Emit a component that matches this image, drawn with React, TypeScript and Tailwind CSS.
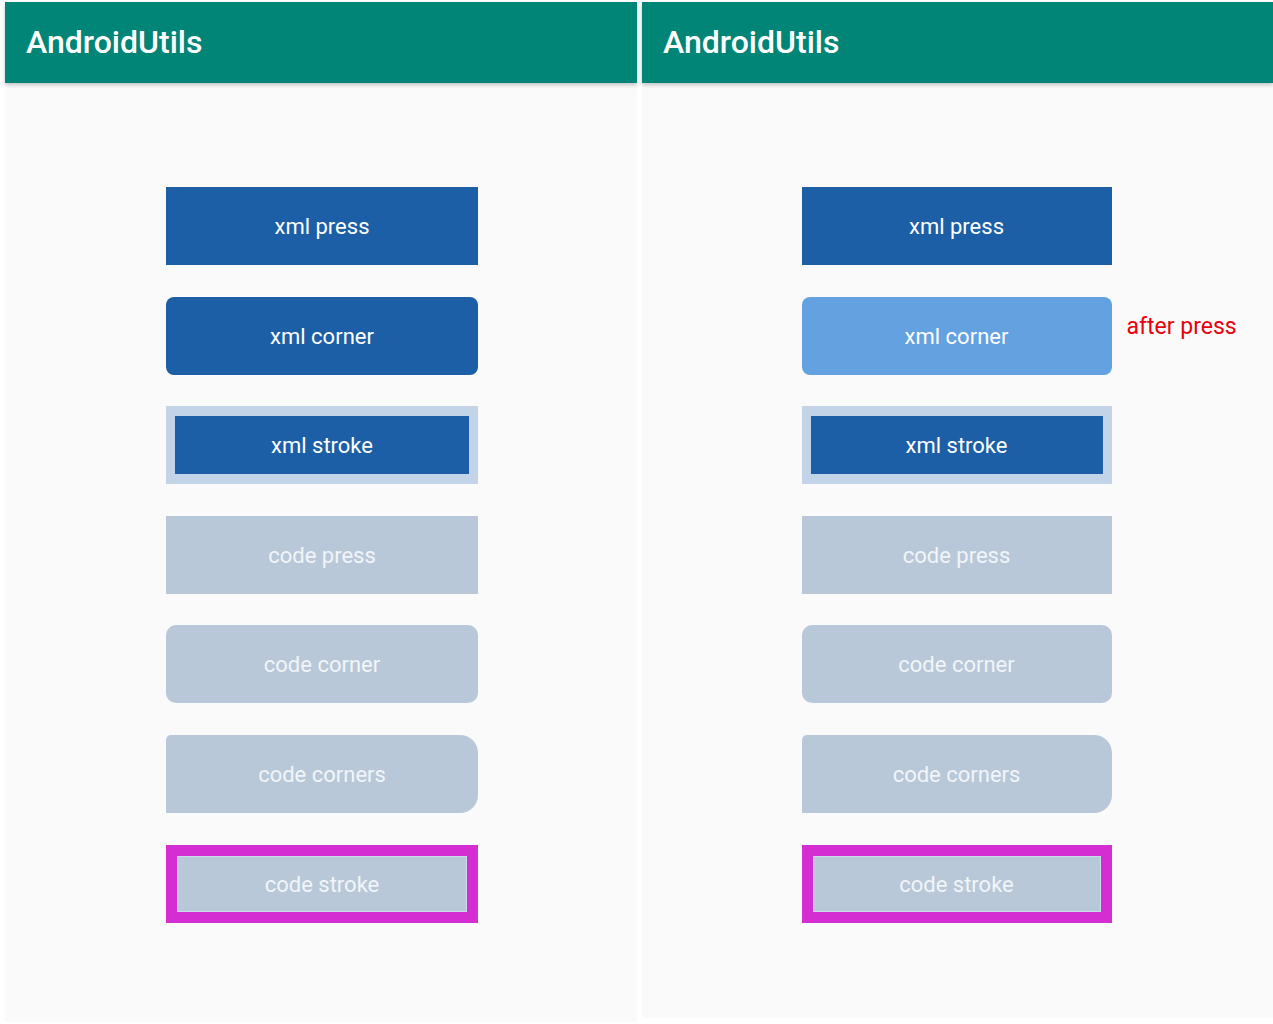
import React from 'react'

type Kind = 'xmlPress' | 'xmlCorner' | 'xmlCornerPressed' | 'xmlStroke' | 'codePress' | 'codeCorner' | 'codeCorners' | 'codeStroke'

const BUTTONS: { label: string; kind: Kind }[] = [
  { label: 'xml press', kind: 'xmlPress' },
  { label: 'xml corner', kind: 'xmlCorner' },
  { label: 'xml stroke', kind: 'xmlStroke' },
  { label: 'code press', kind: 'codePress' },
  { label: 'code corner', kind: 'codeCorner' },
  { label: 'code corners', kind: 'codeCorners' },
  { label: 'code stroke', kind: 'codeStroke' },
]

function DemoButton({ label, kind, width }: { label: string; kind: Kind; width: string }) {
  const text = 'text-[22px] leading-none pt-[2px]'

  if (kind === 'xmlStroke') {
    return (
      <div className={`${width} h-[78px] bg-[#c3d4e9] px-[9px] py-[10px] flex`}>
        <div className={`flex-1 bg-[#1c5fa7] text-white flex items-center justify-center ${text}`}>{label}</div>
      </div>
    )
  }

  if (kind === 'codeStroke') {
    return (
      <div className={`${width} h-[78px] bg-[#d42dd2] px-[11px] py-[11px] flex`}>
        <div className={`flex-1 bg-[#b9c8d8] border border-[#c9dcef] text-[#f1f5f9] flex items-center justify-center ${text}`}>
          {label}
        </div>
      </div>
    )
  }

  const styles: Record<string, string> = {
    xmlPress: 'bg-[#1c5fa7] text-white',
    xmlCorner: 'bg-[#1c5fa7] text-white rounded-[8px]',
    xmlCornerPressed: 'bg-[#64a1e1] text-white rounded-[8px]',
    codePress: 'bg-[#b9c8d8] text-[#f1f5f9]',
    codeCorner: 'bg-[#b9c8d8] text-[#f1f5f9] rounded-[10px]',
    codeCorners: 'bg-[#b9c8d8] text-[#f1f5f9] rounded-tl-[5px] rounded-tr-[18px] rounded-br-[18px] rounded-bl-none',
  }

  return (
    <div className={`${width} h-[78px] flex items-center justify-center ${text} ${styles[kind]}`}>{label}</div>
  )
}

function Phone({ pressed, className }: { pressed?: boolean; className: string }) {
  const width = pressed ? 'w-[310px]' : 'w-[312px]'
  return (
    <div className={`bg-[#fafafa] flex flex-col ${className}`}>
      <div className="h-[81px] bg-[#018577] flex items-center pl-[21px] shadow-[0_2px_4px_rgba(0,0,0,0.22)] relative z-10">
        <span className="text-white text-[32px] font-medium leading-none mb-[2px]">AndroidUtils</span>
      </div>
      <div className={`flex flex-col items-center gap-[31.6px] pt-[104px] ${pressed ? 'pr-[2px]' : 'pl-[2px]'}`}>
        {BUTTONS.map((b) => {
          if (pressed && b.kind === 'xmlCorner') {
            return (
              <div key={b.label} className="relative">
                <DemoButton label={b.label} kind="xmlCornerPressed" width={width} />
                <span className="absolute left-full top-[18px] ml-[15px] whitespace-nowrap text-[23px] leading-6 text-[#e8000b]">
                  after press
                </span>
              </div>
            )
          }
          return <DemoButton key={b.label} label={b.label} kind={b.kind} width={width} />
        })}
      </div>
    </div>
  )
}

export default function App() {
  return (
    <div className="w-[1273px] h-[1024px] bg-white flex gap-[5px] overflow-hidden" style={{ fontFamily: 'Roboto, "Noto Sans", sans-serif' }}>
      <Phone className="w-[632px] h-[1020px] mt-[2px] ml-[5px]" />
      <Phone pressed className="w-[631px] h-[1016px] mt-[2px]" />
    </div>
  )
}
